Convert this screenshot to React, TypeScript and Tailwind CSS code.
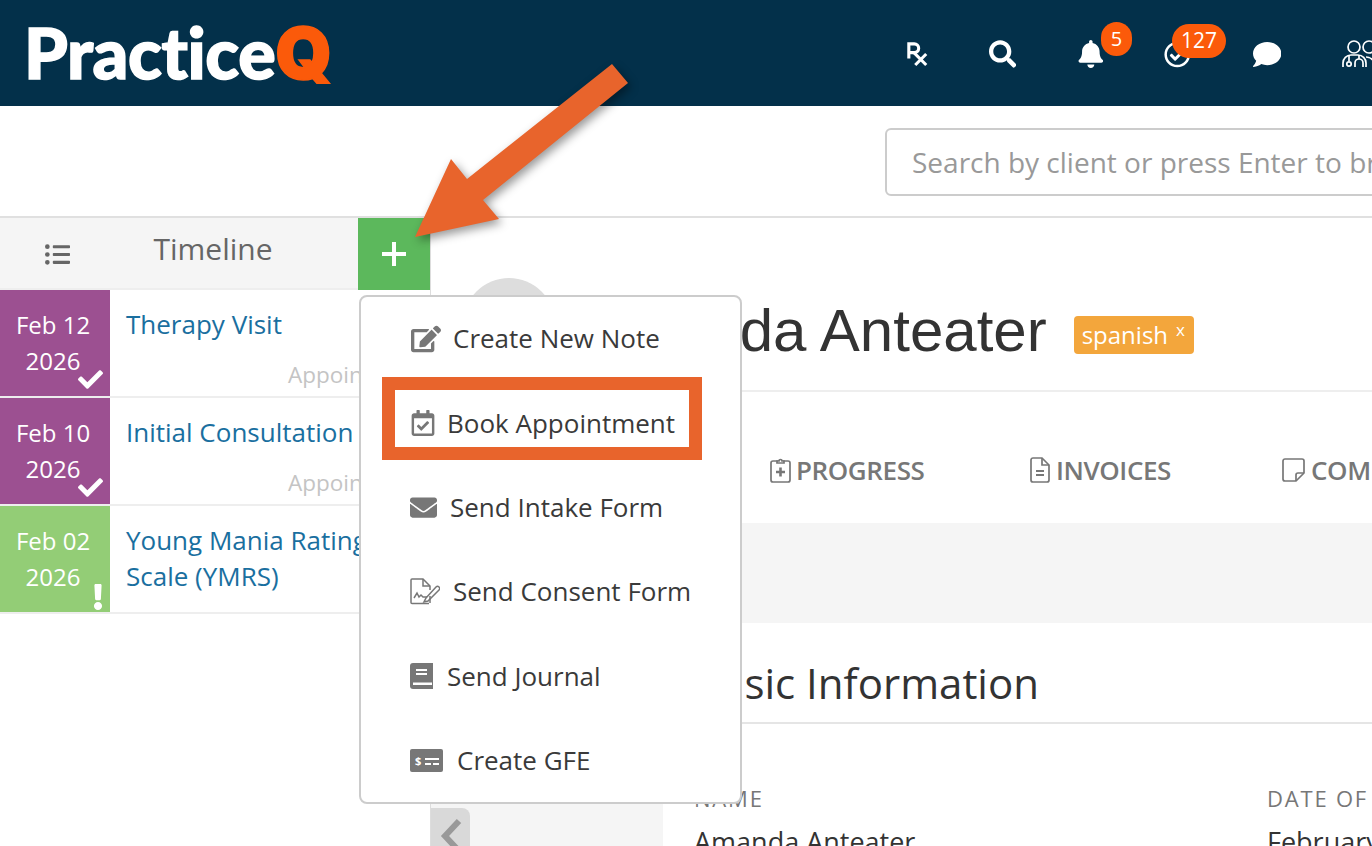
import { FaBell, FaCheck, FaEdit, FaEnvelope, FaExclamation, FaListUl, FaRegCalendarCheck, FaRegCheckCircle, FaSearch, FaComment } from 'react-icons/fa';

const OPEN = "font-['Open_Sans',sans-serif]";

function RxIcon() {
  return (
    <svg width="24" height="28" viewBox="0 0 24 28" fill="none" stroke="white" strokeWidth="3.4">
      <path d="M2 19V3h6a4.5 4.5 0 0 1 0 9.5H2" />
      <path d="M7 12l14 14M21 14L9 26" />
    </svg>
  );
}

function DoctorsIcon() {
  return (
    <svg width="34" height="30" viewBox="0 0 34 30" fill="none" stroke="white" strokeWidth="1.7">
      <circle cx="12" cy="8" r="6" />
      <circle cx="27" cy="8" r="6" />
      <path d="M1 28v-4a8 8 0 0 1 8-8h7a8 8 0 0 1 8 8v4" />
      <path d="M24 18a8 8 0 0 1 8 6v4" />
      <path d="M7 16v6M17 16v4" />
      <circle cx="7" cy="25" r="2.200" />
      <path d="M13 28v-4a4 4 0 0 1 8 0v4" />
    </svg>
  );
}

function ConsentIcon() {
  return (
    <svg width="30" height="27" viewBox="0 0 30 27" fill="none" stroke="#777" strokeWidth="1.500">
      <path d="M19 25.500H2a1 1 0 0 1-1-1V2a1 1 0 0 1 1-1h11l7 7v4" />
      <path d="M13 1v7h7" />
      <path d="M4 20l3-5 2 4 2-2 2 2h6" />
      <path d="M16 20l10-11a2 2 0 0 1 3 3L18 23l-4 1z" fill="white" />
      <path d="M20 18v7" />
    </svg>
  );
}

function BookIcon() {
  return (
    <svg width="23" height="26" viewBox="0 0 23 26">
      <path d="M3 0h20v26H3a3 3 0 0 1-3-3V3a3 3 0 0 1 3-3z" fill="#777" />
      <path d="M3 19.500h19v2.500H3z" fill="white" />
      <path d="M6 6h11v2H6zM6 10h11v2H6z" fill="white" />
    </svg>
  );
}

function GfeIcon() {
  return (
    <svg width="33" height="23" viewBox="0 0 33 23">
      <rect width="33" height="23" rx="2" fill="#777" />
      <path d="M15 9h14v2H15zM15 14h6v2h-6zM23 14h6v2h-6z" fill="white" />
      <text x="5" y="16" fontSize="11" fontWeight="700" fill="white" fontFamily="Open Sans, sans-serif">$</text>
    </svg>
  );
}

function ProgressIcon() {
  return (
    <svg width="21" height="26" viewBox="0 0 21 26" fill="none" stroke="#777" strokeWidth="1.700">
      <rect x="1" y="4" width="19" height="21" rx="2" />
      <path d="M7 6V4h2a1.500 1.500 0 0 1 3 0h2v2z" fill="white" />
      <path d="M10.500 10.500v9M6 15h9" strokeWidth="2.600" />
    </svg>
  );
}

function InvoiceIcon() {
  return (
    <svg width="20" height="26" viewBox="0 0 20 26" fill="none" stroke="#777" strokeWidth="1.700">
      <path d="M12 1H3a2 2 0 0 0-2 2v20a2 2 0 0 0 2 2h14a2 2 0 0 0 2-2V8z" />
      <path d="M12 1v7h7" />
      <path d="M6 14h8M6 18h8" strokeWidth="2" />
    </svg>
  );
}

function NoteIcon() {
  return (
    <svg width="23" height="24" viewBox="0 0 23 24" fill="none" stroke="#777" strokeWidth="1.700">
      <path d="M14 23H3a2 2 0 0 1-2-2V3a2 2 0 0 1 2-2h17a2 2 0 0 1 2 2v12z" />
      <path d="M14 23v-6a2 2 0 0 1 2-2h6" />
    </svg>
  );
}

const entries = [
  { d: 'Feb 12', title: 'Therapy Visit', sub: 'Appointment', bg: 'bg-[#9c5091]', mark: 'check' },
  { d: 'Feb 10', title: 'Initial Consultation', sub: 'Appointment', bg: 'bg-[#9c5091]', mark: 'check' },
  { d: 'Feb 02', title: 'Young Mania Rating Scale (YMRS)', sub: '', bg: 'bg-[#93cd76]', mark: 'alert' },
];

function TimelineRow({ e }: { e: (typeof entries)[number] }) {
  return (
    <div className="flex h-[108px] border-b-2 border-[#eeeeee]">
      <div className={`relative flex w-[110px] shrink-0 flex-col items-center pr-[4px] pt-[17px] text-[24px] leading-[36px] text-white ${e.bg}`}>
        <span>{e.d}</span>
        <span>2026</span>
        {e.mark === 'check' ? (
          <FaCheck className="absolute bottom-[4px] right-[7px] text-white" size={25} />
        ) : (
          <FaExclamation className="absolute bottom-[2px] right-[-1px] text-white" size={26} />
        )}
      </div>
      <div className="relative flex-1 pl-[16px] pt-[16px] text-[26px] leading-[36px] text-[#1a6f9f]">
        {e.title}
        {e.sub && <span className="absolute left-[178px] top-[69px] whitespace-nowrap text-[22.500px] leading-[32px] text-[#c4c4c4]">{e.sub}</span>}
      </div>
    </div>
  );
}

const menuItems = [
  { icon: <FaEdit size={30} color="#777" className="ml-[1px]" />, label: 'Create New Note', gap: 'ml-[12px]' },
  { icon: <FaRegCalendarCheck size={26} color="#777" />, label: 'Book Appointment', gap: 'ml-[11px]' },
  { icon: <FaEnvelope size={27} color="#777" />, label: 'Send Intake Form', gap: 'ml-[13px]' },
  { icon: <ConsentIcon />, label: 'Send Consent Form', gap: 'ml-[13px]' },
  { icon: <BookIcon />, label: 'Send Journal', gap: 'ml-[14px]' },
  { icon: <GfeIcon />, label: 'Create GFE', gap: 'ml-[14px]' },
];

export default function App() {
  return (
    <div className={`relative h-[846px] w-[1372px] overflow-hidden bg-white ${OPEN}`}>
      {/* top bar */}
      <header className="flex h-[106px] items-center justify-between overflow-hidden bg-[#03304a] pl-[24px]">
        <div className="font-['Lato',sans-serif] text-[70px] font-black leading-none tracking-[-0.4px] text-white [-webkit-text-stroke:1.5px_white]">
          Practice<span className="font-['Inter',sans-serif] text-[72px] tracking-[0px] text-[#fb5a0a] [-webkit-text-stroke:1.5px_#fb5a0a]">Q</span>
        </div>
        <div className="relative flex h-full w-[468px] shrink-0 items-center text-white">
          <div className="flex w-full translate-y-[1px] items-center pl-[3px]">
            <RxIcon />
            <FaSearch size={30} className="ml-[60px]" />
            <FaBell size={28} className="ml-[62px]" />
            <FaRegCheckCircle size={29} className="ml-[60px]" />
            <FaComment size={31} className="ml-[62px]" />
            <div className="ml-[61px] w-[30px] shrink-0 overflow-hidden"><DoctorsIcon /></div>
          </div>
          <span className="absolute left-[197px] top-[22px] flex h-[34px] w-[31px] items-center justify-center rounded-full bg-[#fb5a0a] text-[20px]">5</span>
          <span className="absolute left-[268px] top-[24px] flex h-[34px] w-[54px] items-center justify-center rounded-full bg-[#fb5a0a] text-[21px]">127</span>
        </div>
      </header>

      {/* search strip */}
      <div className="flex h-[112px] items-start border-b-2 border-[#e0e0e0] pl-[885px] pt-[22px]">
        <div className="flex h-[68px] w-[600px] shrink-0 items-center rounded-[6px] border-2 border-[#cccccc] pl-[25px] text-[28px] whitespace-nowrap text-[#999999]">
          Search by client or press Enter to browse all clients
        </div>
      </div>

      <div className="flex h-[628px]">
        {/* timeline */}
        <aside className="w-[431px] shrink-0 border-r border-[#dddddd]">
          <div className="flex h-[72px] border-b-2 border-[#eeeeee] bg-[#f5f5f5]">
            <div className="flex w-[358px] text-[#666666]">
              <div className="flex w-[114px] items-center justify-center pt-[3px]"><FaListUl size={25} /></div>
              <div className="w-[198px] pt-[11px] text-center text-[30px] leading-[40px]">Timeline</div>
            </div>
            <div className="flex h-[72px] w-[72px] items-center justify-center bg-[#5cb85c]">
              <svg width="24" height="24" viewBox="0 0 24 24" fill="white"><path d="M10 0h4v10h10v4H14v10h-4V14H0v-4h10z" /></svg>
            </div>
          </div>
          {entries.map((e) => <TimelineRow key={e.d} e={e} />)}
        </aside>

        {/* client */}
        <main className="min-w-0 flex-1">
          <div className="flex h-[174px] items-start border-b-2 border-[#eeeeee] pl-[32px] pt-[60px]">
            <div className="h-[92px] w-[92px] shrink-0 rounded-full bg-[#dddddd]" />
            <h1 className="ml-[28px] mt-[17px] whitespace-nowrap font-['Liberation_Sans',sans-serif] text-[60px] leading-[72px] text-[#333333]">Amanda Anteater</h1>
            <span className="ml-[27px] mt-[38px] flex h-[38px] w-[120px] shrink-0 items-center rounded-[4px] bg-[#f3a63c] pl-[8px] text-[24px] text-white">
              spanish <sup className="relative top-[-5px] ml-[8px] text-[17px]">x</sup>
            </span>
          </div>
          <div className="flex h-[131px] items-start pl-[339px] pt-[60px] text-[26px] font-semibold leading-[36px] tracking-[-0.4px] whitespace-nowrap text-[#777777]">
            <span className="flex w-[260px] shrink-0 items-center gap-[5px]"><ProgressIcon />PROGRESS</span>
            <span className="flex w-[252px] shrink-0 items-center gap-[6px]"><InvoiceIcon />INVOICES</span>
            <span className="flex shrink-0 items-center gap-[6px]"><NoteIcon />COMMUNICATION</span>
          </div>
          <div className="h-[100px] bg-[#f5f5f5]" />
          <div className="flex h-[223px]">
            <div className="w-[232px] shrink-0 bg-[#f5f5f5] pt-[185px]">
              <div className="flex h-[60px] w-[39px] justify-center rounded-tr-[8px] bg-[#d9d9d9] pt-[10px] text-[#999999]">
                <svg width="22" height="36" viewBox="0 0 22 36" fill="none" stroke="currentColor" strokeWidth="6"><path d="M19 3L5 18l14 15" /></svg>
              </div>
            </div>
            <div className="min-w-0 flex-1 pl-[31px]">
              <h2 className="border-b-2 border-[#e5e5e5] pb-[7px] pt-[28px] text-[42px] leading-[64px] whitespace-nowrap text-[#333333]">Basic Information</h2>
              <div className="flex pt-[60px] whitespace-nowrap">
                <div className="w-[573px] shrink-0">
                  <div className="text-[22px] leading-[28px] tracking-[1.8px] text-[#777777]">NAME</div>
                  <div className="pt-[12px] text-[27px] leading-[36px] text-[#333333]">Amanda Anteater</div>
                </div>
                <div>
                  <div className="text-[22px] leading-[28px] tracking-[1.8px] text-[#777777]">DATE OF BIRTH</div>
                  <div className="pt-[12px] text-[27px] leading-[36px] text-[#333333]">February 1, 1990</div>
                </div>
              </div>
            </div>
          </div>
        </main>
      </div>

      {/* dropdown menu */}
      <div className="absolute left-[359px] top-[295px] flex h-[509px] w-[383px] flex-col rounded-[8px] border-2 border-[#cccccc] bg-white">
        {menuItems.map((m) => (
          <div key={m.label} className="flex h-[84.400px] shrink-0 items-center pb-[1px] pl-[49px] text-[26px] text-[#3a3a3a]">
            {m.icon}
            <span className={m.gap}>{m.label}</span>
          </div>
        ))}
      </div>

      {/* annotations */}
      <div className="absolute left-[382px] top-[377px] h-[83px] w-[320px] border-[13px] border-[#e8642c]" />
      <svg className="absolute left-[400px] top-[50px]" width="250" height="210" viewBox="400 50 250 210" style={{ filter: 'drop-shadow(3px 4px 5px rgba(0,0,0,0.4))' }}>
        <path d="M415 237L451 159L467 179L612 64L628 83L483 200L499 219Z" fill="#e8642c" />
      </svg>
    </div>
  );
}
